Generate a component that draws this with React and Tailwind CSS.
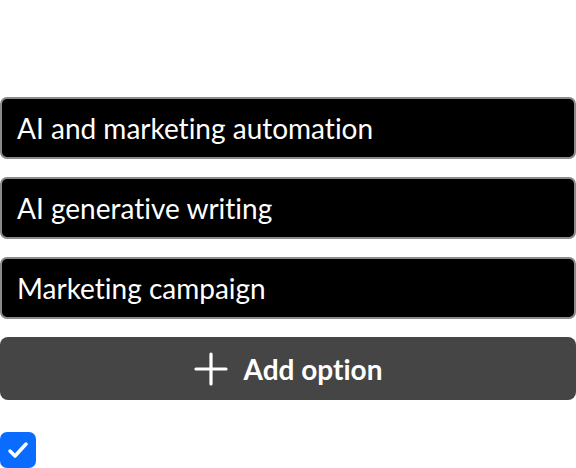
const options = ['AI and marketing automation', 'AI generative writing', 'Marketing campaign'];

export default function App() {
  return (
    <div className="w-[576px] h-[468px] overflow-hidden bg-white pt-[97px] font-['Lato',sans-serif] [font-variant-ligatures:none]">
      <div className="flex flex-col gap-[18px]">
        {options.map((o) => (
          <div
            key={o}
            className="h-[62px] flex items-center px-[15px] bg-black border-2 border-[#8a8a8a] rounded-[7px] text-white text-[28px]"
          >
            {o}
          </div>
        ))}
        <button className="h-[63px] flex items-center justify-center gap-[16px] bg-[#454545] rounded-[8px] text-white text-[28px] font-bold">
          <svg width="34" height="34" viewBox="0 0 34 34" fill="none" stroke="white" strokeWidth="3.2" strokeLinecap="round">
            <path d="M17 2v30M2 17h30" />
          </svg>
          <span>Add option</span>
        </button>
      </div>
      <div className="mt-[32px] w-[36px] h-[36px] rounded-[7px] bg-[#0a6cff] flex items-center justify-center">
        <svg width="22" height="22" viewBox="0 0 22 22" fill="none" stroke="white" strokeWidth="3.5" strokeLinecap="round" strokeLinejoin="round">
          <path d="M3 12l5 5L19 5" />
        </svg>
      </div>
    </div>
  );
}
